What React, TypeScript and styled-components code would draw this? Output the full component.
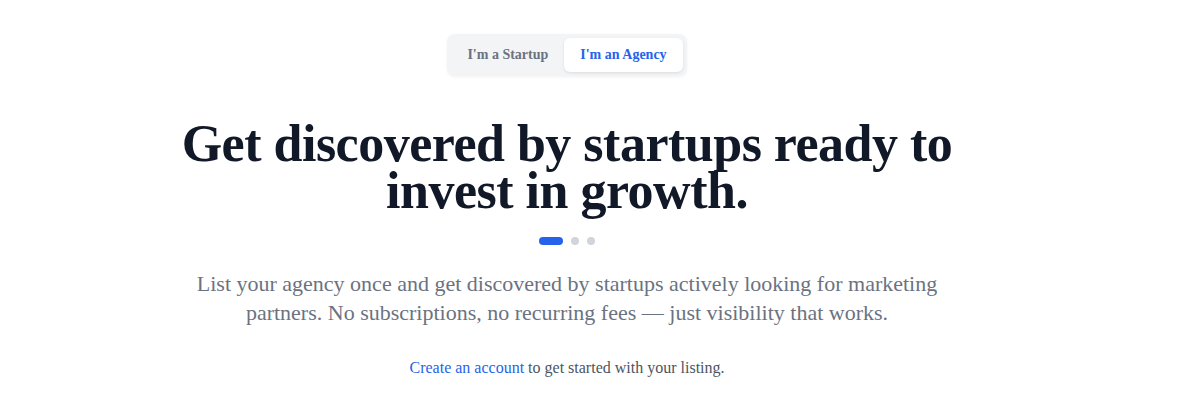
import React, { useState } from 'react';
import styled, { createGlobalStyle } from 'styled-components';

const GlobalStyle = createGlobalStyle`
  html, body {
    margin: 0;
    padding: 0;
    background: #ffffff;
  }
  body {
    font-family: "Liberation Serif", "DejaVu Serif", serif;
    -webkit-font-smoothing: antialiased;
  }
`;

const Page = styled.div`
  width: 1134px;
  display: flex;
  flex-direction: column;
  align-items: center;
  padding-top: 34px;
`;

const Toggle = styled.div`
  display: flex;
  padding: 4px;
  background: #f3f4f6;
  border-radius: 8px;
  box-shadow: 0 1px 3px rgba(0, 0, 0, 0.06);
`;

const ToggleButton = styled.button<{ $active?: boolean }>`
  border: none;
  cursor: pointer;
  font-family: inherit;
  font-size: 14px;
  font-weight: 700;
  height: 34px;
  padding: 0 16px;
  border-radius: 6px;
  color: ${p => (p.$active ? '#2563eb' : '#6b7280')};
  background: ${p => (p.$active ? '#ffffff' : 'transparent')};
  box-shadow: ${p => (p.$active ? '0 1px 3px rgba(0,0,0,0.1)' : 'none')};
`;

const Heading = styled.h1`
  margin: 44px 0 0;
  font-size: 52px;
  line-height: 47px;
  font-weight: 700;
  color: #111827;
  text-align: center;
  letter-spacing: -0.5px;
`;

const Dots = styled.div`
  display: flex;
  gap: 8px;
  margin-top: 23px;
`;

const Dot = styled.span<{ $active?: boolean }>`
  width: ${p => (p.$active ? '24px' : '8px')};
  height: 8px;
  border-radius: 4px;
  background: ${p => (p.$active ? '#2563eb' : '#d1d5db')};
`;

const Lead = styled.p`
  margin: 24px 0 0;
  font-size: 22px;
  line-height: 29px;
  color: #6b7280;
  text-align: center;
`;

const Note = styled.p`
  margin: 32px 0 0;
  font-size: 16px;
  color: #4b5563;
  text-align: center;
`;

const Link = styled.a`
  color: #2563eb;
  text-decoration: none;
`;

export default function App() {
  const [mode, setMode] = useState<'startup' | 'agency'>('agency');
  return (
    <>
      <GlobalStyle />
      <Page>
        <Toggle>
          <ToggleButton $active={mode === 'startup'} onClick={() => setMode('startup')}>
            I'm a Startup
          </ToggleButton>
          <ToggleButton $active={mode === 'agency'} onClick={() => setMode('agency')}>
            I'm an Agency
          </ToggleButton>
        </Toggle>
        <Heading>
          Get discovered by startups ready to
          <br />
          invest in growth.
        </Heading>
        <Dots>
          <Dot $active />
          <Dot />
          <Dot />
        </Dots>
        <Lead>
          List your agency once and get discovered by startups actively looking for marketing
          <br />
          partners. No subscriptions, no recurring fees — just visibility that works.
        </Lead>
        <Note>
          <Link href="#">Create an account</Link> to get started with your listing.
        </Note>
      </Page>
    </>
  );
}
